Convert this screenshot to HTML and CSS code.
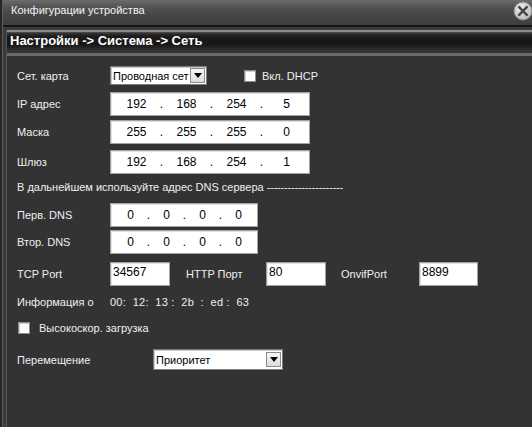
FILE: index.html
```html
<!DOCTYPE html>
<html lang="ru">
<head>
<meta charset="utf-8">
<title>Конфигурации устройства</title>
<link rel="stylesheet" href="styles.css">
</head>
<body>
<div class="window">
  <div class="window-in">
    <div class="titlebar">
      <span class="title">Конфигурации устройства</span>
      <span class="close">
        <svg width="20" height="20" viewBox="0 0 20 20">
          <defs>
            <radialGradient id="cg" cx="40%" cy="35%" r="70%">
              <stop offset="0" stop-color="#f2f2f2"/>
              <stop offset="1" stop-color="#b4b4b4"/>
            </radialGradient>
          </defs>
          <circle cx="10" cy="10" r="9" fill="url(#cg)" stroke="#8a8a8a" stroke-width="1"/>
          <path d="M6.2 6.2 L13.8 13.8 M13.8 6.2 L6.2 13.8" stroke="#4a4a4a" stroke-width="2.6" stroke-linecap="round"/>
        </svg>
      </span>
    </div>
    <div class="frame">
      <div class="frame-in">
        <div class="section-head">Настройки -&gt; Система -&gt; Сеть</div>
        <div class="content">
          <div class="row row-card">
            <span class="lbl">Сет. карта</span>
            <div class="select sel-card">
              <span class="sel-text">Проводная сет</span>
              <span class="sel-btn"><svg width="8" height="5" viewBox="0 0 8 5"><path d="M0 0 H8 L4 5 Z" fill="#000"/></svg></span>
            </div>
            <span class="check check-dhcp"></span>
            <span class="check-lbl">Вкл. DHCP</span>
          </div>

          <div class="row row-ip">
            <span class="lbl">IP адрес</span>
            <div class="field ip">
              <span class="oct">192</span><span class="dot">.</span><span class="oct">168</span><span class="dot">.</span><span class="oct">254</span><span class="dot">.</span><span class="oct">5</span>
            </div>
          </div>

          <div class="row row-mask">
            <span class="lbl">Маска</span>
            <div class="field ip">
              <span class="oct">255</span><span class="dot">.</span><span class="oct">255</span><span class="dot">.</span><span class="oct">255</span><span class="dot">.</span><span class="oct">0</span>
            </div>
          </div>

          <div class="row row-gw">
            <span class="lbl">Шлюз</span>
            <div class="field ip">
              <span class="oct">192</span><span class="dot">.</span><span class="oct">168</span><span class="dot">.</span><span class="oct">254</span><span class="dot">.</span><span class="oct">1</span>
            </div>
          </div>

          <div class="row row-note">В дальнейшем используйте адрес DNS сервера <span class="dashes">----------------------</span></div>

          <div class="row row-dns1">
            <span class="lbl">Перв. DNS</span>
            <div class="field dns">
              <span class="oct">0</span><span class="dot">.</span><span class="oct">0</span><span class="dot">.</span><span class="oct">0</span><span class="dot">.</span><span class="oct">0</span>
            </div>
          </div>

          <div class="row row-dns2">
            <span class="lbl">Втор. DNS</span>
            <div class="field dns">
              <span class="oct">0</span><span class="dot">.</span><span class="oct">0</span><span class="dot">.</span><span class="oct">0</span><span class="dot">.</span><span class="oct">0</span>
            </div>
          </div>

          <div class="row row-ports">
            <span class="lbl">TCP Port</span>
            <div class="field port port-tcp">34567</div>
            <span class="lbl lbl-http">HTTP Порт</span>
            <div class="field port port-http">80</div>
            <span class="lbl lbl-onvif">OnvifPort</span>
            <div class="field port port-onvif">8899</div>
          </div>

          <div class="row row-mac">
            <span class="lbl">Информация о</span>
            <span class="mac">00:  12:  13 :  2b  :  ed :  63</span>
          </div>

          <div class="row row-fast">
            <span class="check check-fast"></span>
            <span class="check-lbl fast-lbl">Высокоскор. загрузка</span>
          </div>

          <div class="row row-move">
            <span class="lbl lbl-move">Перемещение</span>
            <div class="select sel-move">
              <span class="sel-text">Приоритет</span>
              <span class="sel-btn"><svg width="8" height="5" viewBox="0 0 8 5"><path d="M0 0 H8 L4 5 Z" fill="#000"/></svg></span>
            </div>
          </div>
        </div>
      </div>
    </div>
  </div>
</div>
</body>
</html>
```

FILE: styles.css
```css
html, body {
  margin: 0;
  padding: 0;
  background: #333333;
}

body {
  font-family: "Liberation Sans", Arial, sans-serif;
  font-size: 11px;
  color: #f0f0f0;
}

.window {
  width: 532px;
  height: 427px;
  box-sizing: border-box;
  border-left: 2px solid #262626;
  overflow: hidden;
  background: #333333;
}

.window-in {
  height: 100%;
  border-left: 1px solid #5e5e5e;
  display: flex;
  flex-direction: column;
}

.titlebar {
  height: 25px;
  flex: none;
  display: flex;
  justify-content: space-between;
  align-items: flex-start;
  background: linear-gradient(#6c6c6c 0px, #555555 6px, #474747 14px, #3e3e3e 25px);
  border-bottom: 2px solid #141414;
}

.title {
  margin-left: 8px;
  margin-top: 4px;
  font-size: 11px;
  color: #f4f4f4;
}

.close {
  width: 20px;
  height: 20px;
  margin-top: 1px;
  margin-right: -1px;
  display: block;
}

.close svg {
  display: block;
}

.frame {
  flex: 1;
  padding-left: 3px;
  padding-top: 3px;
  background: #3a3a3a;
  display: flex;
}

.frame-in {
  flex: 1;
  border-left: 1px solid #555555;
  background: #333333;
  display: flex;
  flex-direction: column;
}

.section-head {
  height: 18px;
  border-top: 2px solid #8a8a8a;
  border-bottom: 3px solid #333333;
  box-shadow: 0 3px 0 #6a6a6a;
  background: linear-gradient(#505050 0px, #2a2a2a 2px, #1a1a1a 5px, #161616 12px, #262626 16px, #303030 18px);
  padding-left: 3px;
  font-weight: bold;
  font-size: 13px;
  line-height: 18px;
  color: #ffffff;
  margin-bottom: 3px;
}

.content {
  padding-left: 10px;
}

.row {
  display: flex;
  align-items: center;
}

.lbl {
  width: 93px;
  flex: none;
}

.row-card { margin-top: 10px; height: 19px; }
.row-ip { margin-top: 7px; height: 24px; }
.row-mask { margin-top: 4px; height: 24px; }
.row-gw { margin-top: 6px; height: 24px; }
.row-note { margin-top: 6px; height: 14px; white-space: pre; }
.row-dns1 { margin-top: 9px; height: 24px; }
.row-dns2 { margin-top: 3px; height: 24px; }
.row-ports { margin-top: 8px; height: 24px; }
.row-mac { margin-top: 9px; height: 14px; }
.row-fast { margin-top: 12px; height: 14px; }
.row-move { margin-top: 14px; height: 21px; }

.dashes {
  letter-spacing: -0.2px;
}

.select {
  box-sizing: border-box;
  background: #ffffff;
  border: 1px solid #7c7c7c;
  box-shadow: inset 1px 1px 0 #c8c8c8;
  display: flex;
  align-items: center;
  color: #000;
  overflow: hidden;
}

.sel-text {
  flex: 1;
  padding-left: 2px;
  white-space: nowrap;
  overflow: hidden;
}

.sel-btn {
  flex: none;
  box-sizing: border-box;
  width: 15px;
  height: 15px;
  margin-right: 1px;
  background: linear-gradient(#f6f6f6, #dcdcdc);
  border: 1px solid #8c8c8c;
  display: flex;
  align-items: center;
  justify-content: center;
}

.sel-btn svg { display: block; }

.sel-card {
  width: 97px;
  height: 19px;
}

.sel-move {
  width: 130px;
  height: 21px;
}

.check {
  box-sizing: border-box;
  width: 12px;
  height: 12px;
  background: #ffffff;
  border: 1px solid #8e8e8e;
  box-shadow: inset 1px 1px 0 #d0d0d0;
  flex: none;
}

.check-dhcp { margin-left: 37px; }
.check-lbl { margin-left: 6px; }

.check-fast { margin-left: 1px; }
.fast-lbl { margin-left: 9px; }

.field {
  box-sizing: border-box;
  height: 24px;
  background: #ffffff;
  border: 1px solid #a2a2a2;
  box-shadow: inset 1px 1px 0 #e2e2e2;
  color: #000;
  font-size: 12px;
}

.ip {
  width: 200px;
  display: flex;
  align-items: center;
  padding-left: 3px;
}

.ip .oct { width: 45px; text-align: center; }
.ip .dot { width: 5px; text-align: center; }

.dns {
  width: 148px;
  display: flex;
  align-items: center;
  padding-left: 4px;
}

.dns .oct { width: 31px; text-align: center; }
.dns .dot { width: 5px; text-align: center; }

.port {
  padding-left: 2px;
  padding-top: 2px;
  line-height: 14px;
  flex: none;
}

.port-tcp { width: 60px; }
.lbl-http { margin-left: 16px; width: 80px; }
.port-http { width: 60px; }
.lbl-onvif { margin-left: 15px; width: 78px; }
.port-onvif { width: 59px; }

.mac {
  white-space: pre;
  letter-spacing: 0.25px;
}

.lbl-move { width: 136px; }
```
